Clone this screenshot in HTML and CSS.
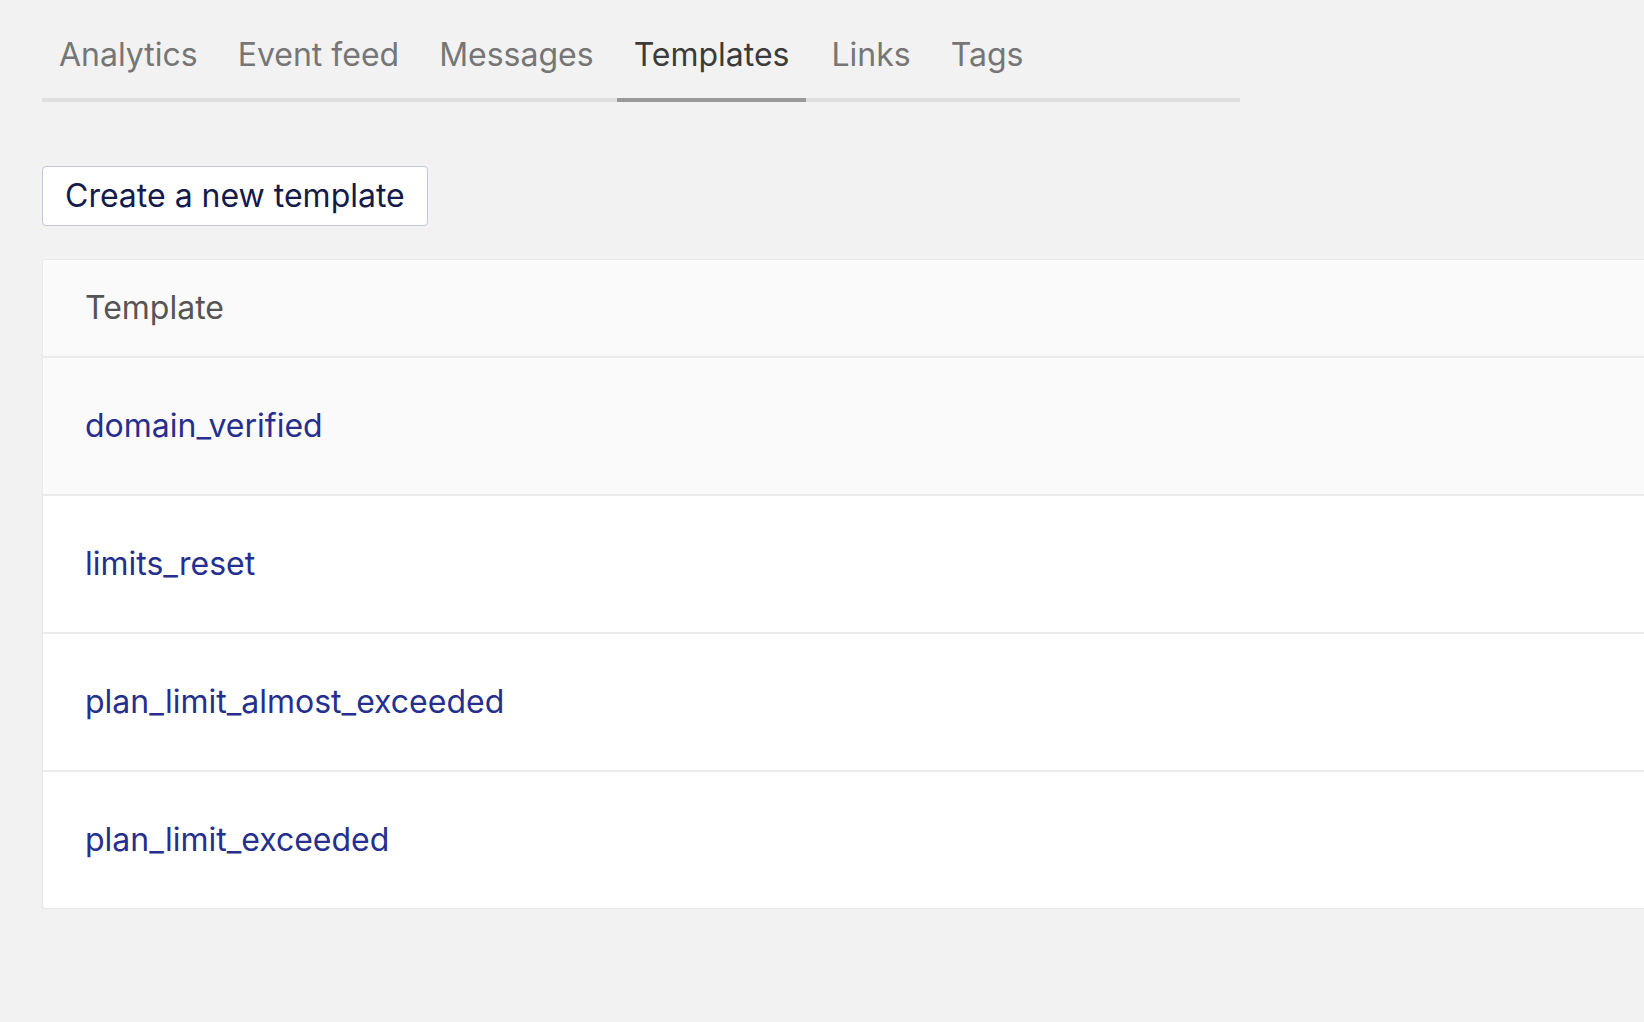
FILE: index.html
```html
<!DOCTYPE html>
<html lang="en">
<head>
<meta charset="utf-8">
<title>Templates</title>
<link rel="stylesheet" href="styles.css">
</head>
<body>
<div class="page">
  <nav class="tabs">
    <a class="tab" href="#">Analytics</a>
    <a class="tab" href="#">Event feed</a>
    <a class="tab" href="#">Messages</a>
    <a class="tab active" href="#">Templates</a>
    <a class="tab" href="#">Links</a>
    <a class="tab" href="#">Tags</a>
  </nav>
  <div class="actions">
    <button class="btn" type="button">Create a new template</button>
  </div>
  <div class="table">
    <div class="row head"><span class="cell">Template</span></div>
    <div class="row hover"><a class="cell link" href="#">domain_verified</a></div>
    <div class="row"><a class="cell link" href="#">limits_reset</a></div>
    <div class="row"><a class="cell link" href="#">plan_limit_almost_exceeded</a></div>
    <div class="row last"><a class="cell link" href="#">plan_limit_exceeded</a></div>
  </div>
</div>
</body>
</html>
```

FILE: styles.css
```css
html, body {
  margin: 0;
  padding: 0;
  background: #f2f2f2;
  overflow: hidden;
}
body {
  font-family: Inter, "Noto Sans", "Liberation Sans", sans-serif;
  font-size: 32px;
  color: #333;
}
.page {
  padding: 35px 0 0 42px;
  width: 1700px;
}
.tabs {
  display: flex;
  width: 1198px;
  border-bottom: 4px solid #dedede;
  gap: 6px;
}
.tab {
  display: block;
  padding: 0 17px 23px;
  line-height: 40px;
  color: #767676;
  text-decoration: none;
  margin-bottom: -4px;
  border-bottom: 4px solid transparent;
}
.tab:nth-child(4) {
  margin-right: 2px;
}
.tab.active {
  color: #3b3b3b;
  border-bottom-color: #999;
}
.actions {
  margin-top: 64px;
}
.btn {
  font-family: inherit;
  font-size: 32px;
  line-height: 39px;
  padding: 9px 22px 10px;
  background: #fff;
  color: #141a4a;
  border: 1px solid #c3c6df;
  border-radius: 4px;
}
.table {
  margin-top: 33px;
  border: 1px solid #e9e9e9;
  border-radius: 4px;
  background: #fff;
  box-shadow: 0 1px 2px rgba(0,0,0,0.05);
  overflow: hidden;
}
.row {
  display: flex;
  align-items: center;
  height: 136px;
  padding-left: 42px;
  border-bottom: 2px solid #ebebeb;
}
.row.head {
  height: 96px;
  background: #fafafa;
  color: #555;
}
.row.hover {
  background: #fafafa;
}
.row.last {
  border-bottom: none;
}
.cell {
  line-height: 40px;
}
.link {
  color: #262f8e;
  text-decoration: none;
}
```
